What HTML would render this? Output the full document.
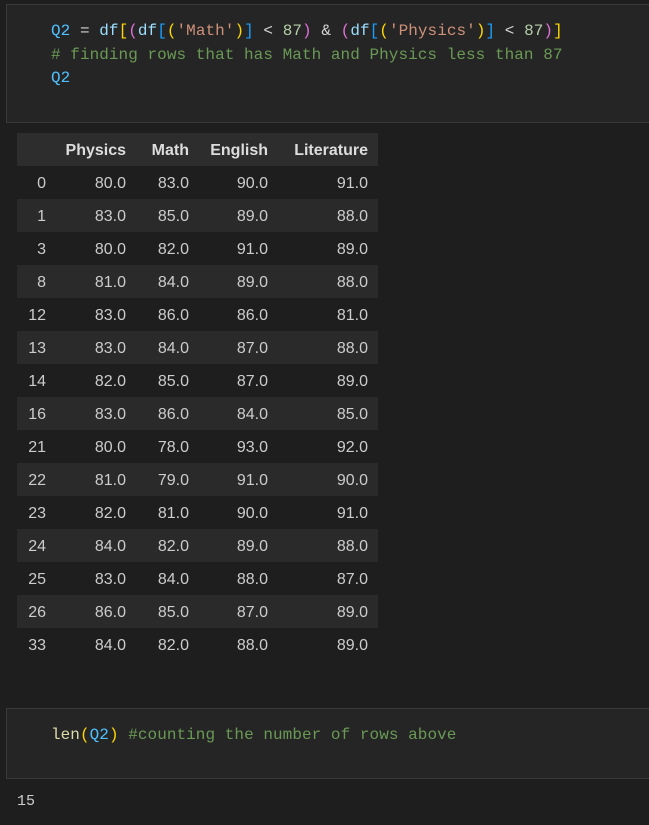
<!DOCTYPE html>
<html><head><style>
body{margin:0;width:649px;height:825px;background:#1e1e1e;overflow:hidden;position:relative;font-family:"Liberation Sans",sans-serif;}
.cell{position:absolute;left:6px;right:-2px;background:#252526;border:1px solid #3a3a3a;}
.code{position:absolute;left:51px;font-family:"Liberation Mono",monospace;font-size:16px;letter-spacing:0.05px;white-space:pre;color:#d4d4d4;line-height:23.5px;}
.v{color:#4fc1ff}.f{color:#9cdcfe}.s{color:#ce9178}.n{color:#b5cea8}.c{color:#6a9955}.y{color:#ffd700}.p{color:#da70d6}.b{color:#179fff}.fn{color:#dcdcaa}
.row{position:absolute;left:17px;width:361px;height:33px;color:#cccccc;font-size:16px;}
.row span{position:absolute;top:9px;text-align:right;}
.h{background:#2d2d2d;font-weight:bold;color:#dddddd;}
.sh{background:#2a2a2a;}
</style></head><body>
<div class="cell" style="top:4px;height:117px;"></div>
<div class="code" style="top:20px;"><span class="v">Q2</span> = <span class="f">df</span><span class="y">[</span><span class="p">(</span><span class="f">df</span><span class="b">[</span><span class="y">(</span><span class="s">'Math'</span><span class="y">)</span><span class="b">]</span> &lt; <span class="n">87</span><span class="p">)</span> &amp; <span class="p">(</span><span class="f">df</span><span class="b">[</span><span class="y">(</span><span class="s">'Physics'</span><span class="y">)</span><span class="b">]</span> &lt; <span class="n">87</span><span class="p">)</span><span class="y">]</span>
<span class="c"># finding rows that has Math and Physics less than 87</span>
<span class="v">Q2</span></div>
<div id="t"></div>
<div class="cell" style="top:708px;height:69px;"></div>
<div class="code" style="top:724px;"><span class="fn">len</span><span class="y">(</span><span class="v">Q2</span><span class="y">)</span> <span class="c">#counting the number of rows above</span></div>
<div style="position:absolute;left:17px;top:793px;color:#cccccc;font-family:'Liberation Mono',monospace;font-size:15px;">15</div>
<script>
var d=[["0","80.0","83.0","90.0","91.0"],["1","83.0","85.0","89.0","88.0"],["3","80.0","82.0","91.0","89.0"],["8","81.0","84.0","89.0","88.0"],["12","83.0","86.0","86.0","81.0"],["13","83.0","84.0","87.0","88.0"],["14","82.0","85.0","87.0","89.0"],["16","83.0","86.0","84.0","85.0"],["21","80.0","78.0","93.0","92.0"],["22","81.0","79.0","91.0","90.0"],["23","82.0","81.0","90.0","91.0"],["24","84.0","82.0","89.0","88.0"],["25","83.0","84.0","88.0","87.0"],["26","86.0","85.0","87.0","89.0"],["33","84.0","82.0","88.0","89.0"]];
var R=[29,109,172,251,351];
function row(cells,top,cls){var h='<div class="row '+cls+'" style="top:'+top+'px">';for(var i=0;i<5;i++){h+='<span style="right:'+(361-R[i])+'px">'+cells[i]+'</span>';}return h+'</div>';}
var h=row(["","Physics","Math","English","Literature"],133,"h");
for(var k=0;k<d.length;k++)h+=row(d[k],166+33*k,k%2?"sh":"");
document.getElementById('t').innerHTML=h;
</script>
</body></html>
